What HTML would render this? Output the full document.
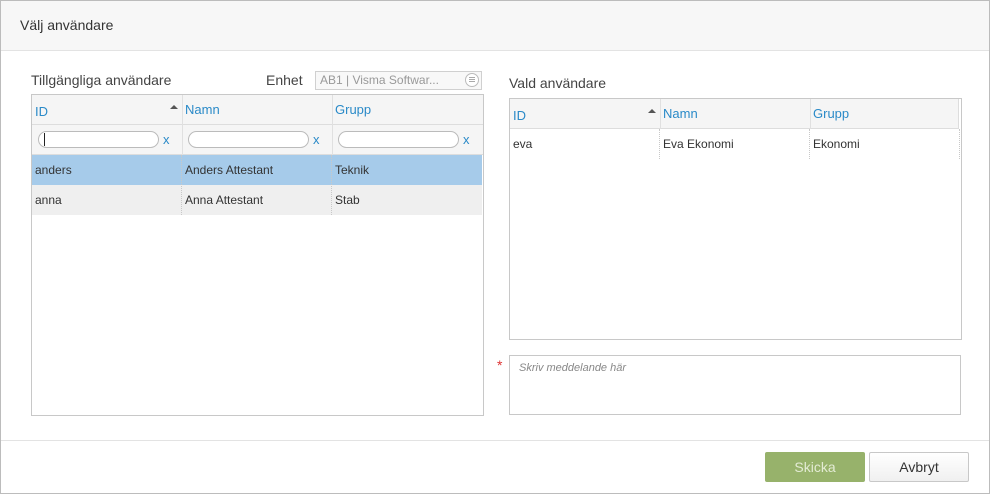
<!DOCTYPE html><html><head><style>
body{margin:0;width:990px;height:494px;position:relative;font-family:"Liberation Sans",sans-serif;background:#fff;overflow:hidden}
.a{position:absolute;box-sizing:border-box}
.t{font-size:12px;color:#333;position:absolute}
.h{font-size:13px;color:#2a8ac8;position:absolute}
.inp{position:absolute;height:17px;border:1px solid #bbb;border-radius:9px;background:#fff;box-sizing:border-box}
.x{position:absolute;color:#2a8ac8;font-size:13px}
</style></head><body>
<div class="a" style="left:0;top:0;width:990px;height:494px;border:1px solid #bcbcbc"></div>
<div class="a" style="left:1px;top:1px;width:988px;height:50px;background:#f7f7f7;border-bottom:1px solid #e3e3e3"></div>
<div class="a" style="left:20px;top:17px;font-size:14px;color:#333">Välj användare</div>
<div class="a" style="left:31px;top:72px;font-size:14px;color:#444">Tillgängliga användare</div>
<div class="a" style="left:266px;top:72px;font-size:14px;color:#444">Enhet</div>
<div class="a" style="left:315px;top:71px;width:167px;height:19px;border:1px solid #d0d0d0;background:#f8f8f8"></div>
<div class="a" style="left:320px;top:73px;font-size:12px;color:#999">AB1 | Visma Softwar...</div>
<div class="a" style="left:465px;top:73px;width:14px;height:14px;border:1px solid #bbb;border-radius:50%;background:#fff"></div>
<div class="a" style="left:469px;top:77px;width:6px;height:5px;border-top:1px solid #aaa;border-bottom:1px solid #aaa"></div>
<div class="a" style="left:469px;top:79px;width:6px;height:1px;background:#aaa"></div>
<!-- left grid -->
<div class="a" style="left:31px;top:94px;width:453px;height:322px;border:1px solid #c8c8c8"></div>
<div class="a" style="left:32px;top:95px;width:451px;height:30px;background:#f5f5f5;border-bottom:1px solid #ddd"></div>
<div class="a" style="left:32px;top:125px;width:451px;height:30px;background:#f5f5f5;border-bottom:1px solid #ddd"></div>
<div class="a" style="left:182px;top:95px;width:1px;height:60px;background:#e0e0e0"></div>
<div class="a" style="left:332px;top:95px;width:1px;height:60px;background:#e0e0e0"></div>
<div class="a" style="left:32px;top:155px;width:450px;height:30px;background:#a6cbea"></div>
<div class="a" style="left:32px;top:185px;width:450px;height:30px;background:#efefef"></div>
<div class="a" style="left:181px;top:155px;width:0;height:60px;border-left:1px dotted #c8c8c8"></div>
<div class="a" style="left:331px;top:155px;width:0;height:60px;border-left:1px dotted #c8c8c8"></div>
<div class="h" style="left:35px;top:104px">ID</div>
<div class="a" style="left:170px;top:105px;width:0;height:0;border-left:4px solid transparent;border-right:4px solid transparent;border-bottom:4px solid #555"></div>
<div class="h" style="left:185px;top:102px">Namn</div>
<div class="h" style="left:335px;top:102px">Grupp</div>
<div class="inp" style="left:38px;top:131px;width:121px"></div><div class="a" style="left:44px;top:133px;width:1px;height:13px;background:#222"></div><div class="x" style="left:163px;top:132px">x</div>
<div class="inp" style="left:188px;top:131px;width:121px"></div><div class="x" style="left:313px;top:132px">x</div>
<div class="inp" style="left:338px;top:131px;width:121px"></div><div class="x" style="left:463px;top:132px">x</div>
<div class="t" style="left:35px;top:163px">anders</div><div class="t" style="left:185px;top:163px">Anders Attestant</div><div class="t" style="left:335px;top:163px">Teknik</div>
<div class="t" style="left:35px;top:193px">anna</div><div class="t" style="left:185px;top:193px">Anna Attestant</div><div class="t" style="left:335px;top:193px">Stab</div>
<!-- right -->
<div class="a" style="left:509px;top:75px;font-size:14px;color:#444">Vald användare</div>
<div class="a" style="left:509px;top:98px;width:453px;height:242px;border:1px solid #c8c8c8"></div>
<div class="a" style="left:510px;top:99px;width:449px;height:30px;background:#f5f5f5;border-bottom:1px solid #ddd;border-right:1px solid #ddd"></div>
<div class="a" style="left:660px;top:99px;width:1px;height:30px;background:#e0e0e0"></div>
<div class="a" style="left:810px;top:99px;width:1px;height:30px;background:#e0e0e0"></div>
<div class="a" style="left:659px;top:129px;width:0;height:30px;border-left:1px dotted #c8c8c8"></div>
<div class="a" style="left:809px;top:129px;width:0;height:30px;border-left:1px dotted #c8c8c8"></div>
<div class="a" style="left:959px;top:129px;width:0;height:30px;border-left:1px dotted #c8c8c8"></div>
<div class="h" style="left:513px;top:108px">ID</div>
<div class="a" style="left:648px;top:109px;width:0;height:0;border-left:4px solid transparent;border-right:4px solid transparent;border-bottom:4px solid #555"></div>
<div class="h" style="left:663px;top:106px">Namn</div>
<div class="h" style="left:813px;top:106px">Grupp</div>
<div class="t" style="left:513px;top:137px">eva</div><div class="t" style="left:663px;top:137px">Eva Ekonomi</div><div class="t" style="left:813px;top:137px">Ekonomi</div>
<div class="a" style="left:497px;top:357px;color:#d33;font-size:14px">*</div>
<div class="a" style="left:509px;top:355px;width:452px;height:60px;border:1px solid #c8c8c8"></div>
<div class="a" style="left:519px;top:362px;font-size:11px;font-style:italic;color:#888">Skriv meddelande här</div>
<!-- footer -->
<div class="a" style="left:1px;top:440px;width:988px;height:1px;background:#e3e3e3"></div>
<div class="a" style="left:765px;top:452px;width:100px;height:30px;background:#97b26b;border-radius:2px;color:#e3ebd4;font-size:14px;text-align:center;line-height:30px">Skicka</div>
<div class="a" style="left:869px;top:452px;width:100px;height:30px;border:1px solid #c8c8c8;border-radius:2px;background:linear-gradient(#fff,#f0f0f0);color:#333;font-size:14px;text-align:center;line-height:28px">Avbryt</div>
</body></html>
